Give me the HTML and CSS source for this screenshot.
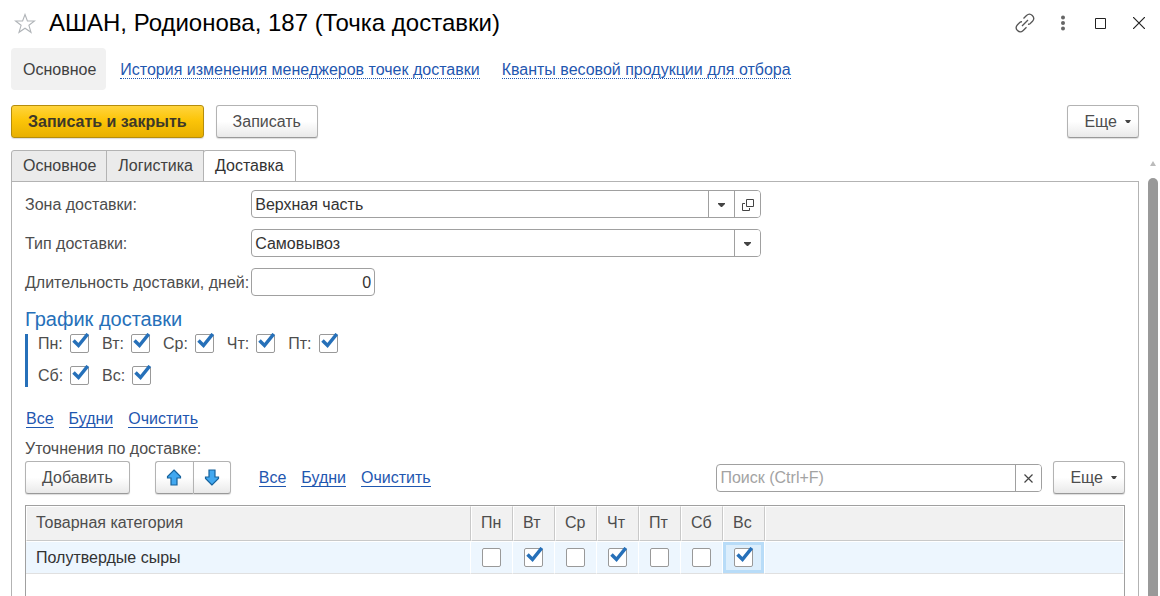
FILE: index.html
```html
<!DOCTYPE html>
<html lang="ru">
<head>
<meta charset="utf-8">
<meta name="viewport" content="width=device-width, initial-scale=1">
<title>АШАН, Родионова, 187 (Точка доставки)</title>
<link rel="stylesheet" href="styles.css">
</head>
<body>
<svg class="defs" aria-hidden="true">
  <symbol id="tick" viewBox="0 0 20 20"><path d="M3.500 7.500 8.500 12.500 17.800 1" fill="none" stroke="#2670b9" stroke-width="3.500"/></symbol>
  <symbol id="caret" viewBox="0 0 6 4"><path d="M0 0h6v1L4 3.500H2L0 1z" fill="#444"/></symbol>
</svg>
<header class="titlebar">
  <button class="star" aria-label="В избранное"><svg width="22" height="21" viewBox="0 0 22 21"><path d="M11 1.500 13.400 8H20.500L14.900 12.300 17 19.300 11 15.200 5 19.300 7.100 12.300 1.500 8H8.600Z" fill="none" stroke="#b0b4b8" stroke-width="1.100"/></svg></button>
  <h1>АШАН, Родионова, 187 (Точка доставки)</h1>
  <div class="window-tools">
    <button class="icon" aria-label="Получить ссылку"><svg width="20" height="20" viewBox="0 0 20 20" fill="none" stroke="#555" stroke-width="1.300"><path d="M7 13 13 7M8.500 5.500 11.500 2.500C15.500-1.200 21 4.300 17.500 8.200L15 10.700Q14 11.400 13 11.200M7 8.800Q6 8.600 5 9.300L2.500 11.800C-1.200 15.700 4.300 21.200 8.200 17.500L11.500 14.300"/></svg></button>
    <button class="icon" aria-label="Меню"><svg width="6" height="16" viewBox="0 0 6 16" fill="#666"><circle cx="3" cy="2.500" r="2"/><circle cx="3" cy="8" r="2"/><circle cx="3" cy="13.500" r="2"/></svg></button>
    <button class="icon" aria-label="Развернуть"><svg width="12" height="12" viewBox="0 0 12 12"><path d="M.5 1.500h10v10H.5z" fill="none" stroke="#222"/></svg></button>
    <button class="icon" aria-label="Закрыть"><svg width="12" height="12" viewBox="0 0 12 12"><path d="m0 0 12 12m0-12-12 12" stroke="#222" stroke-width="1.200"/></svg></button>
  </div>
</header>
<nav class="nav">
  <span class="nav-current">Основное</span>
  <a href="#">История изменения менеджеров точек доставки</a>
  <a href="#">Кванты весовой продукции для отбора</a>
</nav>
<div class="commands">
  <button class="btn primary">Записать и закрыть</button>
  <button class="btn">Записать</button>
  <button class="btn more">Еще <svg width="6" height="3" viewBox="0 0 6 3"><path d="M0 0h6L4 3H2z" fill="#444"/></svg></button>
</div>
<div class="workspace">
  <main class="form">
    <div class="tabs" role="tablist">
      <button class="tab" role="tab" aria-selected="false">Основное</button>
      <button class="tab" role="tab" aria-selected="false">Логистика</button>
      <button class="tab active" role="tab" aria-selected="true">Доставка</button>
    </div>
    <section class="panel">
      <div class="fields">
        <label for="zone">Зона доставки:</label>
        <div class="field">
          <input id="zone" type="text" value="Верхная часть">
          <button class="cell" aria-label="Выбрать"><svg width="7" height="4" viewBox="0 0 7 4"><path d="M0 0h7v1L4 4H3L0 1z" fill="#444"/></svg></button>
          <button class="cell" aria-label="Открыть"><svg width="12" height="12" viewBox="0 0 12 12" fill="none" stroke="#444"><path d="M4.500.5h7v7h-7zM3 4.500H.5v7h7V9"/></svg></button>
        </div>
        <label for="type">Тип доставки:</label>
        <div class="field">
          <select id="type"><option>Самовывоз</option></select>
          <span class="cell"><svg width="7" height="4" viewBox="0 0 7 4"><path d="M0 0h7v1L4 4H3L0 1z" fill="#444"/></svg></span>
        </div>
        <label for="days">Длительность доставки, дней:</label>
        <div class="field short"><input id="days" type="text" value="0"></div>
      </div>
      <h2>График доставки</h2>
      <div class="schedule">
        <div class="days">
          <label class="day">Пн:<span class="check"><input type="checkbox" checked><svg><use href="#tick"/></svg></span></label>
          <label class="day">Вт:<span class="check"><input type="checkbox" checked><svg><use href="#tick"/></svg></span></label>
          <label class="day">Ср:<span class="check"><input type="checkbox" checked><svg><use href="#tick"/></svg></span></label>
          <label class="day">Чт:<span class="check"><input type="checkbox" checked><svg><use href="#tick"/></svg></span></label>
          <label class="day">Пт:<span class="check"><input type="checkbox" checked><svg><use href="#tick"/></svg></span></label>
        </div>
        <div class="days">
          <label class="day">Сб:<span class="check"><input type="checkbox" checked><svg><use href="#tick"/></svg></span></label>
          <label class="day">Вс:<span class="check"><input type="checkbox" checked><svg><use href="#tick"/></svg></span></label>
        </div>
      </div>
      <div class="links"><a href="#">Все</a><a href="#">Будни</a><a href="#">Очистить</a></div>
      <div class="caption">Уточнения по доставке:</div>
      <div class="toolbar">
        <button class="btn">Добавить</button>
        <div class="pair">
          <button class="btn" aria-label="Вверх"><svg width="16" height="17" viewBox="0 0 16 17"><path id="arrow" d="M8 1 14.500 7.500V9H11v7H5V9H1.500V7.500Z" fill="#42a8f0" stroke="#17629c" stroke-width="1.200"/></svg></button>
          <button class="btn" aria-label="Вниз"><svg width="16" height="17" viewBox="0 0 16 17"><use href="#arrow" transform="rotate(180 8 8.500)"/></svg></button>
        </div>
        <div class="links"><a href="#">Все</a><a href="#">Будни</a><a href="#">Очистить</a></div>
        <div class="field search">
          <input type="search" placeholder="Поиск (Ctrl+F)" aria-label="Поиск">
          <button class="cell" aria-label="Очистить поиск"><svg width="9" height="9" viewBox="0 0 9 9"><path d="m.5.5 8 8m0-8-8 8" stroke="#444" stroke-width="1.200"/></svg></button>
        </div>
        <button class="btn more">Еще <svg width="6" height="3" viewBox="0 0 6 3"><path d="M0 0h6L4 3H2z" fill="#444"/></svg></button>
      </div>
      <div class="grid">
        <table>
          <colgroup><col class="name-col"><col class="day-col" span="7"><col></colgroup>
          <thead><tr><th>Товарная категория</th><th>Пн</th><th>Вт</th><th>Ср</th><th>Чт</th><th>Пт</th><th>Сб</th><th>Вс</th><th></th></tr></thead>
          <tbody><tr>
            <td>Полутвердые сыры</td>
            <td><span class="check"><input type="checkbox" aria-label="Пн"><svg><use href="#tick"/></svg></span></td>
            <td><span class="check"><input type="checkbox" aria-label="Вт" checked><svg><use href="#tick"/></svg></span></td>
            <td><span class="check"><input type="checkbox" aria-label="Ср"><svg><use href="#tick"/></svg></span></td>
            <td><span class="check"><input type="checkbox" aria-label="Чт" checked><svg><use href="#tick"/></svg></span></td>
            <td><span class="check"><input type="checkbox" aria-label="Пт"><svg><use href="#tick"/></svg></span></td>
            <td><span class="check"><input type="checkbox" aria-label="Сб"><svg><use href="#tick"/></svg></span></td>
            <td class="selected"><span class="check"><input type="checkbox" aria-label="Вс" checked><svg><use href="#tick"/></svg></span></td>
            <td></td>
          </tr></tbody>
        </table>
      </div>
    </section>
  </main>
  <div class="scroll" aria-hidden="true">
    <svg width="6" height="5" viewBox="0 0 6 5"><path d="M3 0 6 5H0z" fill="#bbb"/></svg>
    <div class="thumb"></div>
  </div>
</div>
</body>
</html>
```
FILE: styles.css
```css
* { box-sizing: border-box; }

body {
  margin: 0;
  height: 100vh;
  overflow: hidden;
  display: flex;
  flex-direction: column;
  background: #fff;
  color: #4d4d4d;
  font: 16px/20px "Liberation Sans", Arial, sans-serif;
}

button, input, select { font: inherit; color: inherit; margin: 0; }
svg { display: block; flex: none; }
.defs { position: absolute; width: 0; height: 0; }
a { color: #1f57b0; text-decoration: none; }

.titlebar {
  display: flex;
  align-items: center;
  height: 48px;
  padding: 0 11px 2px 14px;
}
.star, .icon {
  display: flex;
  align-items: center;
  justify-content: center;
  padding: 0;
  border: 0;
  background: none;
}
.icon { width: 20px; height: 20px; }
h1 {
  margin: 0 0 0 13px;
  color: #000;
  font-size: 24px;
  line-height: 32px;
  font-weight: 400;
}
.window-tools {
  display: flex;
  align-items: center;
  gap: 18px;
  margin-left: auto;
}

.nav { display: flex; align-items: center; padding: 0 11px; }
.nav-current {
  margin-right: 14px;
  padding: 12px 10px 10px 12px;
  border-radius: 4px;
  background: #f1f1f1;
  color: #404040;
}
.nav a {
  margin: 2px 22px 0 0;
  border-bottom: 1px dotted #1f57b0;
  line-height: 17px;
}

.commands { display: flex; gap: 12px; padding: 15px 21px 12px 11px; }
.btn {
  display: flex;
  align-items: center;
  justify-content: center;
  height: 33px;
  padding: 0 16px;
  border: 1px solid #b3b3b3;
  border-bottom-color: #999;
  border-radius: 3px;
  background: linear-gradient(#fff 50%, #e9e9e9);
  box-shadow: 0 1px 1px #ddd;
  white-space: nowrap;
}
.primary {
  border-color: #b58d0c;
  background: linear-gradient(#ffd43d, #fcc509 45%, #e8b000);
  color: #3d3829;
  font-weight: 700;
}
.more { gap: 8px; padding-right: 7px; margin-left: auto; }

.workspace { display: flex; flex: 1; min-height: 0; padding-left: 11px; }
.form { flex: 1; min-width: 0; display: flex; flex-direction: column; }
.tabs { display: flex; margin-bottom: -1px; }
.tab {
  height: 32px;
  padding: 0 10px 0 11px;
  margin-right: -1px;
  border: 1px solid #b3b3b3;
  background: #ebebeb;
  color: #404040;
}
.tab:first-child { border-top-left-radius: 3px; }
.tab.active {
  padding-right: 11px;
  border-bottom-color: #fff;
  border-radius: 3px 3px 0 0;
  background: #fff;
  color: #333;
}
.panel {
  flex: 1;
  display: flex;
  flex-direction: column;
  padding: 8px 13px 0;
  border: 1px solid #b3b3b3;
  border-bottom: 0;
}

.fields {
  display: grid;
  grid-template-columns: max-content minmax(0, 510px);
  column-gap: 2px;
  row-gap: 11px;
  align-items: center;
}
.fields label { padding-top: 2px; white-space: nowrap; }
.field {
  display: flex;
  height: 28px;
  border: 1px solid #a0a0a0;
  border-radius: 4px;
  background: #fff;
  color: #333;
  overflow: hidden;
}
.field input, .field select {
  flex: 1;
  min-width: 0;
  padding: 1px 3px 0;
  border: 0;
  outline: 0;
  background: none;
  appearance: none;
}
.field input::placeholder { color: #a3a3a3; opacity: 1; }
.cell {
  display: flex;
  align-items: center;
  justify-content: center;
  width: 26px;
  padding: 1px 0 0;
  border: 0;
  border-left: 1px solid #a0a0a0;
  background: #fff;
}
.short { width: 124px; }
.short input { text-align: right; }

h2 {
  margin: 11px 0 3px;
  color: #2670b9;
  font-size: 20px;
  line-height: 24px;
  font-weight: 400;
}
.schedule {
  display: flex;
  flex-direction: column;
  gap: 12px;
  padding: 0 0 1px 10px;
  border-left: 3px solid #2670b9;
}
.days { display: flex; gap: 13px; }
.day { display: flex; align-items: center; gap: 7px; }
.day:first-child { width: 51px; justify-content: space-between; gap: 0; }
.check { position: relative; display: block; flex: none; width: 19px; height: 20px; }
.check input {
  display: block;
  width: 19px;
  height: 19px;
  border: 1px solid #999;
  border-radius: 2px;
  background: #fff;
  appearance: none;
}
.check svg {
  position: absolute;
  top: -1px;
  left: 0;
  width: 20px;
  height: 20px;
  visibility: hidden;
  pointer-events: none;
}
.check input:checked + svg { visibility: visible; }

.links { display: flex; gap: 15px; }
.links a { border-bottom: 1px solid #1f57b0; line-height: 17px; }
.panel > .links { padding: 23px 1px 0; }
.caption { margin-top: 11px; }
.toolbar { display: flex; align-items: center; margin: 2px 0 11px; }
.pair { display: flex; margin: 0 28px 0 25px; }
.pair .btn { width: 38px; padding: 0; }
.pair .btn:first-child { border-right: 0; border-radius: 3px 0 0 3px; }
.pair .btn:last-child { border-radius: 0 3px 3px 0; }
.search { width: 326px; margin-left: auto; }
.toolbar .more { margin-left: 11px; }

.grid { flex: 1; border: 1px solid #a0a0a0; border-bottom: 0; }
table { width: 100%; table-layout: fixed; border-collapse: separate; border-spacing: 0; }
.name-col { width: 445px; }
.day-col { width: 42px; }
th {
  height: 35px;
  padding: 0 9px 2px;
  border: 1px solid #fff;
  border-right-color: #c9c9c9;
  border-bottom-color: #c9c9c9;
  background: #f1f1f1;
  font-weight: 400;
  text-align: left;
}
th:last-child { border-right-color: #fff; }
td {
  height: 33px;
  padding: 0 10px;
  border: 1px solid #fff;
  border-width: 1px 1px 1px 0;
  border-bottom-color: #e0e0e0;
  background: #edf6fe;
  color: #333;
}
td .check { margin-left: 1px; }
.selected { background: #dceefc; box-shadow: inset 0 0 0 3px #b8dcf8; }

.scroll {
  display: flex;
  flex-direction: column;
  align-items: center;
  width: 10px;
  margin: 11px 2px 0 9px;
}
.thumb {
  flex: 1;
  width: 10px;
  margin-top: 12px;
  border-radius: 5px 5px 0 0;
  background: #999;
}
```
